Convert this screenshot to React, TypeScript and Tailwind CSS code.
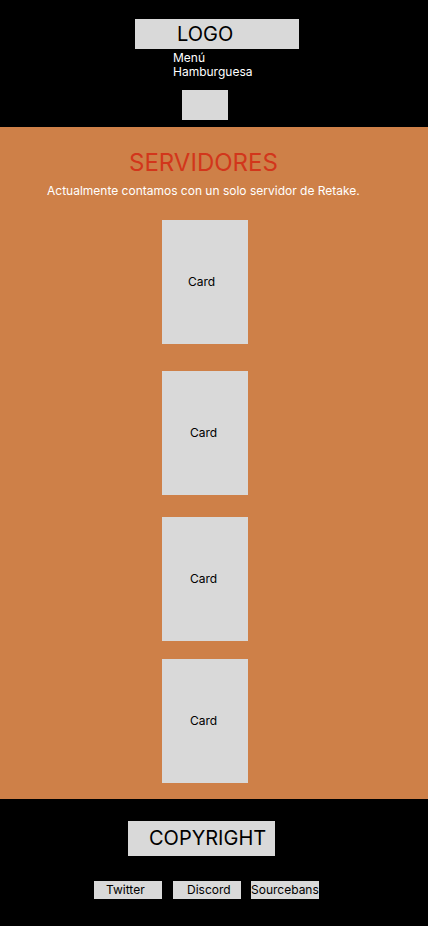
export default function App() {
  const cards = [
    { mt: 'mt-[21px]', pl: 'pl-[26px]' },
    { mt: 'mt-[27px]', pl: 'pl-[28px]' },
    { mt: 'mt-[22px]', pl: 'pl-[28px]' },
    { mt: 'mt-[18px]', pl: 'pl-[28px]' },
  ]

  return (
    <div className="min-h-[926px] bg-black font-['Inter',sans-serif]">
      <header className="h-[127px] bg-black pt-[19px] flex flex-col">
        <div className="ml-[135px] w-[164px] h-[30px] bg-[#d9d9d9] pl-[42px] text-[20px] leading-[30px] text-black">LOGO</div>
        <div className="ml-[173px] mt-[2px] text-[12px] leading-[14px] text-white">Menú<br />Hamburguesa</div>
        <div className="ml-[182px] mt-[11px] w-[46px] h-[30px] bg-[#d9d9d9]" />
      </header>

      <main className="h-[672px] bg-[#ce8048] flex flex-col pt-[21px]">
        <h1 className="ml-[129px] text-[24px] leading-[30px] text-[#d2361b]">SERVIDORES</h1>
        <p className="ml-[47px] mt-[5px] text-[12px] leading-[16px] text-white">Actualmente contamos con un solo servidor de Retake.</p>
        {cards.map((c, i) => (
          <div key={i} className={`${c.mt} ml-[162px] w-[86px] h-[124px] bg-[#d9d9d9] flex items-center ${c.pl} text-[12px] text-black`}>
            Card
          </div>
        ))}
      </main>

      <footer className="h-[127px] bg-black flex flex-col pt-[22px]">
        <div className="ml-[128px] w-[147px] h-[35px] bg-[#d9d9d9] pl-[21px] text-[20px] leading-[35px] text-black">COPYRIGHT</div>
        <div className="mt-[25px] ml-[94px] flex">
          <div className="w-[68px] h-[18px] bg-[#d9d9d9] pl-[12px] text-[12px] leading-[18px] text-black">Twitter</div>
          <div className="ml-[11px] w-[68px] h-[18px] bg-[#d9d9d9] pl-[14px] text-[12px] leading-[18px] text-black">Discord</div>
          <div className="ml-[10px] w-[68px] h-[18px] bg-[#d9d9d9] text-[12px] leading-[18px] text-black whitespace-nowrap">Sourcebans</div>
        </div>
      </footer>
    </div>
  )
}
